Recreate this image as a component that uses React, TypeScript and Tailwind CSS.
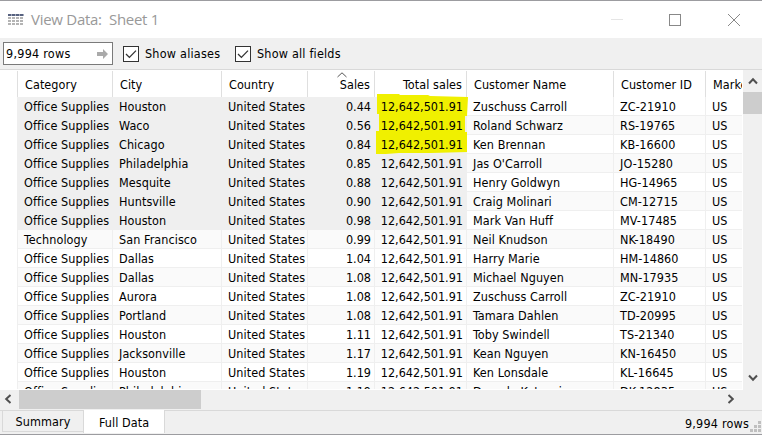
import React from "react";

type Row = [string, string, string, string, string, string, string, string];

const T = "12,642,501.91";
const O = "Office Supplies";
const rows: Row[] = [
  [O, "Houston", "United States", "0.44", T, "Zuschuss Carroll", "ZC-21910", "US"],
  [O, "Waco", "United States", "0.56", T, "Roland Schwarz", "RS-19765", "US"],
  [O, "Chicago", "United States", "0.84", T, "Ken Brennan", "KB-16600", "US"],
  [O, "Philadelphia", "United States", "0.85", T, "Jas O'Carroll", "JO-15280", "US"],
  [O, "Mesquite", "United States", "0.88", T, "Henry Goldwyn", "HG-14965", "US"],
  [O, "Huntsville", "United States", "0.90", T, "Craig Molinari", "CM-12715", "US"],
  [O, "Houston", "United States", "0.98", T, "Mark Van Huff", "MV-17485", "US"],
  ["Technology", "San Francisco", "United States", "0.99", T, "Neil Knudson", "NK-18490", "US"],
  [O, "Dallas", "United States", "1.04", T, "Harry Marie", "HM-14860", "US"],
  [O, "Dallas", "United States", "1.08", T, "Michael Nguyen", "MN-17935", "US"],
  [O, "Aurora", "United States", "1.08", T, "Zuschuss Carroll", "ZC-21910", "US"],
  [O, "Portland", "United States", "1.08", T, "Tamara Dahlen", "TD-20995", "US"],
  [O, "Houston", "United States", "1.11", T, "Toby Swindell", "TS-21340", "US"],
  [O, "Jacksonville", "United States", "1.17", T, "Kean Nguyen", "KN-16450", "US"],
  [O, "Houston", "United States", "1.19", T, "Ken Lonsdale", "KL-16645", "US"],
  [O, "Philadelphia", "United States", "1.19", T, "Damala Kotsonis", "DK-12835", "US"],
];
const headers = ["Category", "City", "Country", "Sales", "Total sales", "Customer Name", "Customer ID", "Market"];
const grid = "grid grid-cols-[95px_109px_86px_67px_92px_147px_92px_37px]";

function Check({ label, className }: { label: string; className: string }) {
  return (
    <label className={`flex items-center ${className}`}>
      <svg width="16" height="16" viewBox="0 0 16 16" className="mr-[6px]" fill="none">
        <rect x="0.5" y="0.5" width="15" height="15" fill="#fff" stroke="#333" />
        <path d="M3 8l3.4 3.4L13 4.6" stroke="#333" strokeWidth="1.3" />
      </svg>
      {label}
    </label>
  );
}

function Chevron({ className }: { className: string }) {
  return (
    <svg width="10" height="10" viewBox="0 0 10 10" className={className} fill="none">
      <path d="M1 7.5L5 3.2L9 7.5" stroke="#505050" strokeWidth="2" />
    </svg>
  );
}

export default function App() {
  return (
    <div className="flex h-[435px] w-[762px] flex-col overflow-hidden border-y border-[#9c9ca0] bg-[#f0f0f0] font-['DejaVu_Sans_Condensed','DejaVu_Sans',sans-serif] text-[12.5px] leading-[19px] tracking-[0.07px] whitespace-pre text-black">
      <header className="flex h-[37px] shrink-0 items-center bg-white pl-2">
        <svg width="16" height="12" viewBox="0 0 16 12" shapeRendering="crispEdges">
          {[0, 4, 8, 12].map((x) => (
            <g key={x}>
              <rect x={x} width="4" height="2" fill="#a3aabb" />
              <rect x={x} width="3" height="2" fill="#56617f" />
              {[3, 6, 9].map((y) => <rect key={y} x={x} y={y} width="3" height="2" fill="#b4b4b4" />)}
            </g>
          ))}
        </svg>
        <h1 className="ml-[7px] font-['Open_Sans',sans-serif] text-[15px] tracking-[-0.28px] text-[#999]">View Data:  Sheet 1</h1>
        <svg width="130" height="14" viewBox="0 0 130 14" className="mr-[21px] ml-auto" fill="none" stroke="#888">
          <path d="M0 6.5H12" stroke="#e5e5e5" />
          <rect x="58.5" y="1.5" width="11" height="11" />
          <path d="M117 1l12 12M129 1L117 13" />
        </svg>
      </header>

      <div className="flex h-[32px] shrink-0 items-center border-b border-[#d9d9d9] pl-[3px]">
        <div className="mr-[10px] flex h-[23px] w-[110px] items-center justify-between border border-[#7a7a7a] bg-white pr-[4px] pl-[2px] tracking-[0.25px]">
          9,994 rows
          <svg width="11" height="10" viewBox="0 0 11 10"><path d="M0 3h6V0l5 5-5 5V7H0z" fill="#aaa" /></svg>
        </div>
        <Check label="Show aliases" className="w-[112px] tracking-[0.22px]" />
        <Check label="Show all fields" className="tracking-[0.2px]" />
      </div>

      <div className="flex h-[320px] shrink-0">
        <main className="relative h-full w-[743px] overflow-hidden border-b border-white bg-white pt-[1px] pl-[17px]">
          <div className={`${grid} h-[26px] w-[725px]`}>
            {headers.map((h, i) => (
              <div key={h} className={`relative overflow-hidden border-l border-[#dfdfdf] pt-[4px] ${i === 3 || i === 4 ? "pr-[4px] text-right" : "pl-[7px]"}`}>
                {h}
                {i === 3 && <svg className="absolute top-[1px] left-[29px]" width="10" height="6" viewBox="0 0 10 6" fill="none" stroke="#555"><path d="M0.5 5L5 .8 9.5 5" /></svg>}
              </div>
            ))}
          </div>
          <svg className="absolute top-[24px] left-[376px]" width="94" height="60" viewBox="0 0 94 60">
            <path d="M1 0H23L24 1H52L54 2L92 3L91 22H89V38H91V58L55 59H23L10 60H0V37H3V20H1Z" fill="#f0f000" />
          </svg>
          {rows.map((r, n) => (
            <div key={n} className={`${grid} h-[19px] w-[725px]`}>
              {r.map((c, i) => (
                <div key={i} className={`overflow-hidden border-b border-l ${n < 7 && i < 5 ? "border-[#efefef] bg-[#efefef]" : n % 2 ? "border-[#efefef] bg-[#fafafa]" : "border-[#efefef] bg-white"} ${i === 3 || i === 4 ? "pr-[3px] text-right tracking-normal" : "pl-[6px]"}`}>
                  <span className="relative">{c}</span>
                </div>
              ))}
            </div>
          ))}
        </main>
        <aside className="flex w-[19px] flex-col items-center">
          <Chevron className="mt-[6px]" />
          <div className="mt-[6px] h-[22px] w-full bg-[#cdcdcd]" />
          <Chevron className="mt-auto mb-[7px] rotate-180" />
        </aside>
      </div>

      <div className="flex h-[21px] shrink-0 items-start border-b border-[#d9d9d9]">
        <Chevron className="mt-[4px] mr-[6px] ml-[3px] -rotate-90" />
        <div className="h-[19px] w-[182px] bg-[#cdcdcd]" />
        <Chevron className="mt-[4px] mr-[26px] ml-auto rotate-90" />
      </div>
      <footer className="flex h-[23px] shrink-0 items-start pl-[2px]">
        <div className="h-[21px] w-[81px] border-b border-l border-[#d9d9d9] pt-[1px] text-center">Summary</div>
        <div className="-mt-px h-[23px] w-[82px] border-x border-[#d9d9d9] bg-white pt-[3px] text-center">Full Data</div>
        <span className="mt-[3px] ml-auto tracking-[0.2px]">9,994 rows</span>
        <svg width="13" height="12" viewBox="0 0 13 12" className="mt-[10px]" fill="#bfbfbf">
          <path d="M9 0h3v3H9zM5 4h3v3H5zM9 4h3v3H9zM1 8h3v3H1zM5 8h3v3H5zM9 8h3v3H9z" />
        </svg>
      </footer>
    </div>
  );
}
